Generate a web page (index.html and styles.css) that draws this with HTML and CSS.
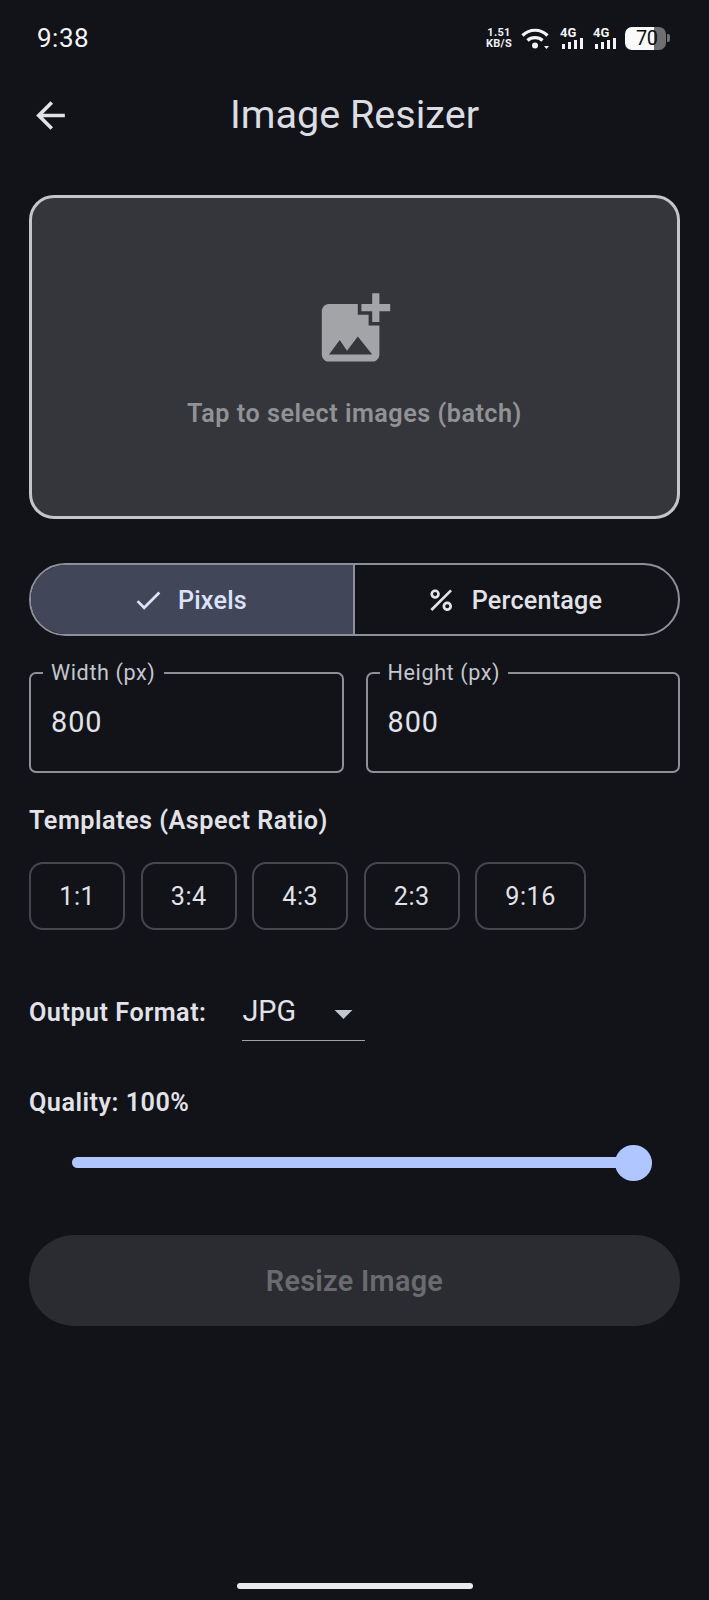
FILE: index.html
```html
<!DOCTYPE html>
<html lang="en">
<head>
<meta charset="utf-8">
<title>Image Resizer</title>
<link rel="stylesheet" href="styles.css">
</head>
<body>
<div class="screen">
  <header class="status">
    <span class="time">9:38</span>
    <div class="status-icons">
      <span class="speed"><span>1.51</span><span>KB/S</span></span>
      <svg class="wifi" viewBox="0 0 28 21" width="28" height="21"><path class="arc" d="M1.500 7.500C8.500 .5 19.500 .5 26.500 7.500"/><path class="arc" d="M6.500 12.500c4-3.800 11-3.800 15 0"/><circle class="dot" cx="14" cy="17.500" r="3"/><path class="dot" d="M23 18h5l-2.500 3z"/></svg>
      <span class="net"><span class="net-label">4G</span><svg viewBox="0 0 21 11" width="21" height="11"><rect class="dot" x="0" y="6" width="3" height="5"/><rect class="dot" x="6" y="4" width="3" height="7"/><rect class="dot" x="12" y="2" width="3" height="9"/><rect class="dot" x="18" y="0" width="3" height="11"/></svg></span>
      <span class="net"><span class="net-label">4G</span><svg viewBox="0 0 21 11" width="21" height="11"><rect class="dot" x="0" y="6" width="3" height="5"/><rect class="dot" x="6" y="4" width="3" height="7"/><rect class="dot" x="12" y="2" width="3" height="9"/><rect class="dot" x="18" y="0" width="3" height="11"/></svg></span>
      <span class="battery">70</span>
      <span class="battery-nub"></span>
    </div>
  </header>

  <div class="appbar">
    <svg class="back" viewBox="0 0 24 24"><path d="M20 11H7.830l5.590-5.590L12 4l-8 8 8 8 1.410-1.410L7.830 13H20v-2z"/></svg>
    <h1 class="title">Image Resizer</h1>
  </div>

  <main class="content">
    <section class="picker">
      <svg class="picker-icon" viewBox="0 0 24 24"><path d="M19 7v2.990s-1.990.01-2 0V7h-3s.01-1.990 0-2h3V2h2v3h3v2h-3zm-3 4V8h-3V5H5c-1.100 0-2 .9-2 2v12c0 1.100.9 2 2 2h12c1.100 0 2-.9 2-2v-8h-3zM5 19l3-4 2 3 3-4 4 5H5z"/></svg>
      <p class="picker-text">Tap to select images (batch)</p>
    </section>

    <div class="segmented">
      <div class="segment selected">
        <svg class="seg-icon" viewBox="0 0 24 24"><path d="M9 16.170L4.830 12l-1.420 1.410L9 19 21 7l-1.410-1.410z"/></svg>
        <span>Pixels</span>
      </div>
      <div class="segment">
        <svg class="seg-icon" viewBox="0 0 24 24"><path d="M7.500 11C9.430 11 11 9.430 11 7.500S9.430 4 7.500 4 4 5.570 4 7.500 5.570 11 7.500 11zm0-5C8.330 6 9 6.670 9 7.500S8.330 9 7.500 9 6 8.330 6 7.500 6.670 6 7.500 6zM4.003 18.583 18.590 3.996l1.414 1.414L5.417 19.997zM16.500 13c-1.930 0-3.500 1.570-3.500 3.500s1.570 3.500 3.500 3.500 3.500-1.570 3.500-3.500-1.570-3.500-3.500-3.500zm0 5c-.83 0-1.500-.67-1.500-1.500s.67-1.500 1.500-1.500 1.500.67 1.500 1.500-.67 1.500-1.500 1.500z"/></svg>
        <span>Percentage</span>
      </div>
    </div>

    <div class="fields">
      <fieldset class="field"><legend>Width (px)</legend><div class="value">800</div></fieldset>
      <fieldset class="field"><legend>Height (px)</legend><div class="value">800</div></fieldset>
    </div>

    <h2 class="heading templates-heading">Templates (Aspect Ratio)</h2>
    <div class="chips">
      <div class="chip">1:1</div>
      <div class="chip">3:4</div>
      <div class="chip">4:3</div>
      <div class="chip">2:3</div>
      <div class="chip">9:16</div>
    </div>

    <div class="format">
      <span class="heading">Output Format:</span>
      <div class="dropdown">
        <span class="dropdown-value">JPG</span>
        <svg class="dropdown-arrow" viewBox="0 0 24 24"><path d="M7 10l5 5 5-5z"/></svg>
      </div>
    </div>

    <div class="heading quality">Quality: 100%</div>
    <div class="slider">
      <div class="track"></div>
      <div class="thumb"></div>
    </div>

    <button class="resize" type="button" disabled>Resize Image</button>
  </main>

  <div class="home-bar"></div>
</div>
</body>
</html>
```
FILE: styles.css
```css
* { box-sizing: border-box; }
html, body { margin: 0; padding: 0; background: #111318; }
body { font-family: Roboto, "Noto Sans", sans-serif; color: #e2e2e9; }

.screen { width: 709px; height: 1600px; display: flex; flex-direction: column; background: #111318; overflow: hidden; }

.status { height: 65px; padding: 11px 39px 0 37px; display: flex; justify-content: space-between; align-items: center; flex: none; }
.time { font-size: 26px; letter-spacing: 0.5px; color: #f4f4f6; }
.status-icons { display: flex; align-items: center; }
.speed { display: flex; flex-direction: column; align-items: center; width: 26px; font-size: 11px; line-height: 11px; font-weight: 700; letter-spacing: 0.3px; color: #f0f0f2; }
.wifi { margin: 0 1px 0 9px; }
.arc { fill: none; stroke: #f4f4f6; stroke-width: 3.200; }
.dot { fill: #f4f4f6; }
.net { display: flex; flex-direction: column; align-items: flex-start; width: 23px; margin-left: 10px; }
.net svg { display: block; margin-left: 2px; }
.net-label { font-size: 13px; line-height: 9px; margin-bottom: 1px; font-weight: 700; color: #f4f4f6; }
.battery { margin-left: 9px; width: 41px; height: 23px; border-radius: 7px; background: linear-gradient(90deg, #fafafa 0 29px, #6f6f72 29px); color: #111; font-size: 20px; letter-spacing: -0.5px; line-height: 23px; padding-left: 11px; }
.battery-nub { width: 3px; height: 8px; margin-left: 1px; border-radius: 0 2px 2px 0; background: #6f6f72; }

.appbar { height: 101px; padding-left: 29px; display: flex; align-items: center; position: relative; flex: none; }
.back { width: 43px; height: 43px; fill: #e2e2e9; }
.title { position: absolute; left: 0; right: 0; margin: 0; padding-bottom: 2px; text-align: center; font-size: 39.600px; font-weight: 400; color: #dcdce3; }

.content { padding: 29px 29px 0; display: flex; flex-direction: column; flex: 1; }

.picker { height: 324px; padding-top: 88px; border: 3px solid #c4c5c8; border-radius: 25px; background: #35363b; display: flex; flex-direction: column; align-items: center; }
.picker-icon { width: 86.400px; height: 86.400px; fill: #a3a4a7; flex: none; }
.picker-text { margin: 24px 0 0; font-size: 25.200px; font-weight: 600; letter-spacing: 0.5px; line-height: 36px; color: #919296; }

.segmented { margin-top: 44px; height: 73px; border: 2px solid #8e9099; border-radius: 37px; display: grid; grid-template-columns: 1fr 1fr; overflow: hidden; }
.segment { display: flex; align-items: center; justify-content: center; gap: 14px; padding: 1px 5px 0 0; font-size: 25.200px; font-weight: 500; letter-spacing: 0.2px; color: #e2e2e9; }
.segment.selected { border-right: 2px solid #8e9099; background: #414759; color: #dce2f9; }
.seg-icon { width: 32.400px; height: 32.400px; fill: currentColor; }

.fields { margin-top: 25px; display: grid; grid-template-columns: 1fr 1fr; gap: 22px; }
.field { margin: 0; padding: 0 20px; height: 112px; border: 2px solid #8e9099; border-radius: 7px; min-width: 0; }
.field legend { margin-left: -8px; padding: 0 8px; font-size: 21.600px; letter-spacing: 0.6px; line-height: 24px; color: #c4c6d0; }
.value { font-size: 28.800px; letter-spacing: 1px; line-height: 36px; margin-top: 19px; color: #e2e2e9; }

.heading { font-size: 25.200px; font-weight: 600; letter-spacing: 0.5px; line-height: 36px; color: #e2e2e9; margin: 0; }
.templates-heading { margin-top: 30px; }

.chips { margin-top: 23px; display: flex; gap: 15.100px; }
.chip { height: 68px; padding: 0 28.250px; border: 2px solid #44474f; border-radius: 14px; display: flex; align-items: center; justify-content: center; font-size: 25.200px; font-weight: 400; letter-spacing: 0.5px; color: #e2e2e9; }

.format { margin-top: 64px; display: flex; align-items: flex-start; gap: 36px; }
.format .heading { margin-top: 1px; }
.dropdown { width: 123px; height: 48px; border-bottom: 1px solid #a0a1a5; position: relative; margin-top: -1px; }
.dropdown-value { font-size: 28.800px; line-height: 36px; display: block; }
.dropdown-arrow { position: absolute; left: 80px; top: -1px; width: 43px; height: 43px; fill: #c4c6d0; }

.quality { margin-top: 44px; }

.slider { margin: 24px 0 0; height: 36px; position: relative; display: flex; align-items: center; padding: 0 28px 1px 43px; }
.track { flex: 1; height: 11px; border-radius: 6px; background: #b0c6ff; }
.thumb { position: absolute; right: 28px; top: 0; width: 37px; height: 36px; border-radius: 50%; background: #b0c6ff; }

.resize { margin-top: 54px; height: 91px; border: 0; border-radius: 46px; background: #2b2c31; font-family: inherit; font-size: 28.800px; font-weight: 600; letter-spacing: 0.3px; color: #6a6b70; }

.home-bar { width: 236px; height: 6px; border-radius: 3px; background: #e8e9ec; margin: 0 auto 11px; flex: none; }
```
